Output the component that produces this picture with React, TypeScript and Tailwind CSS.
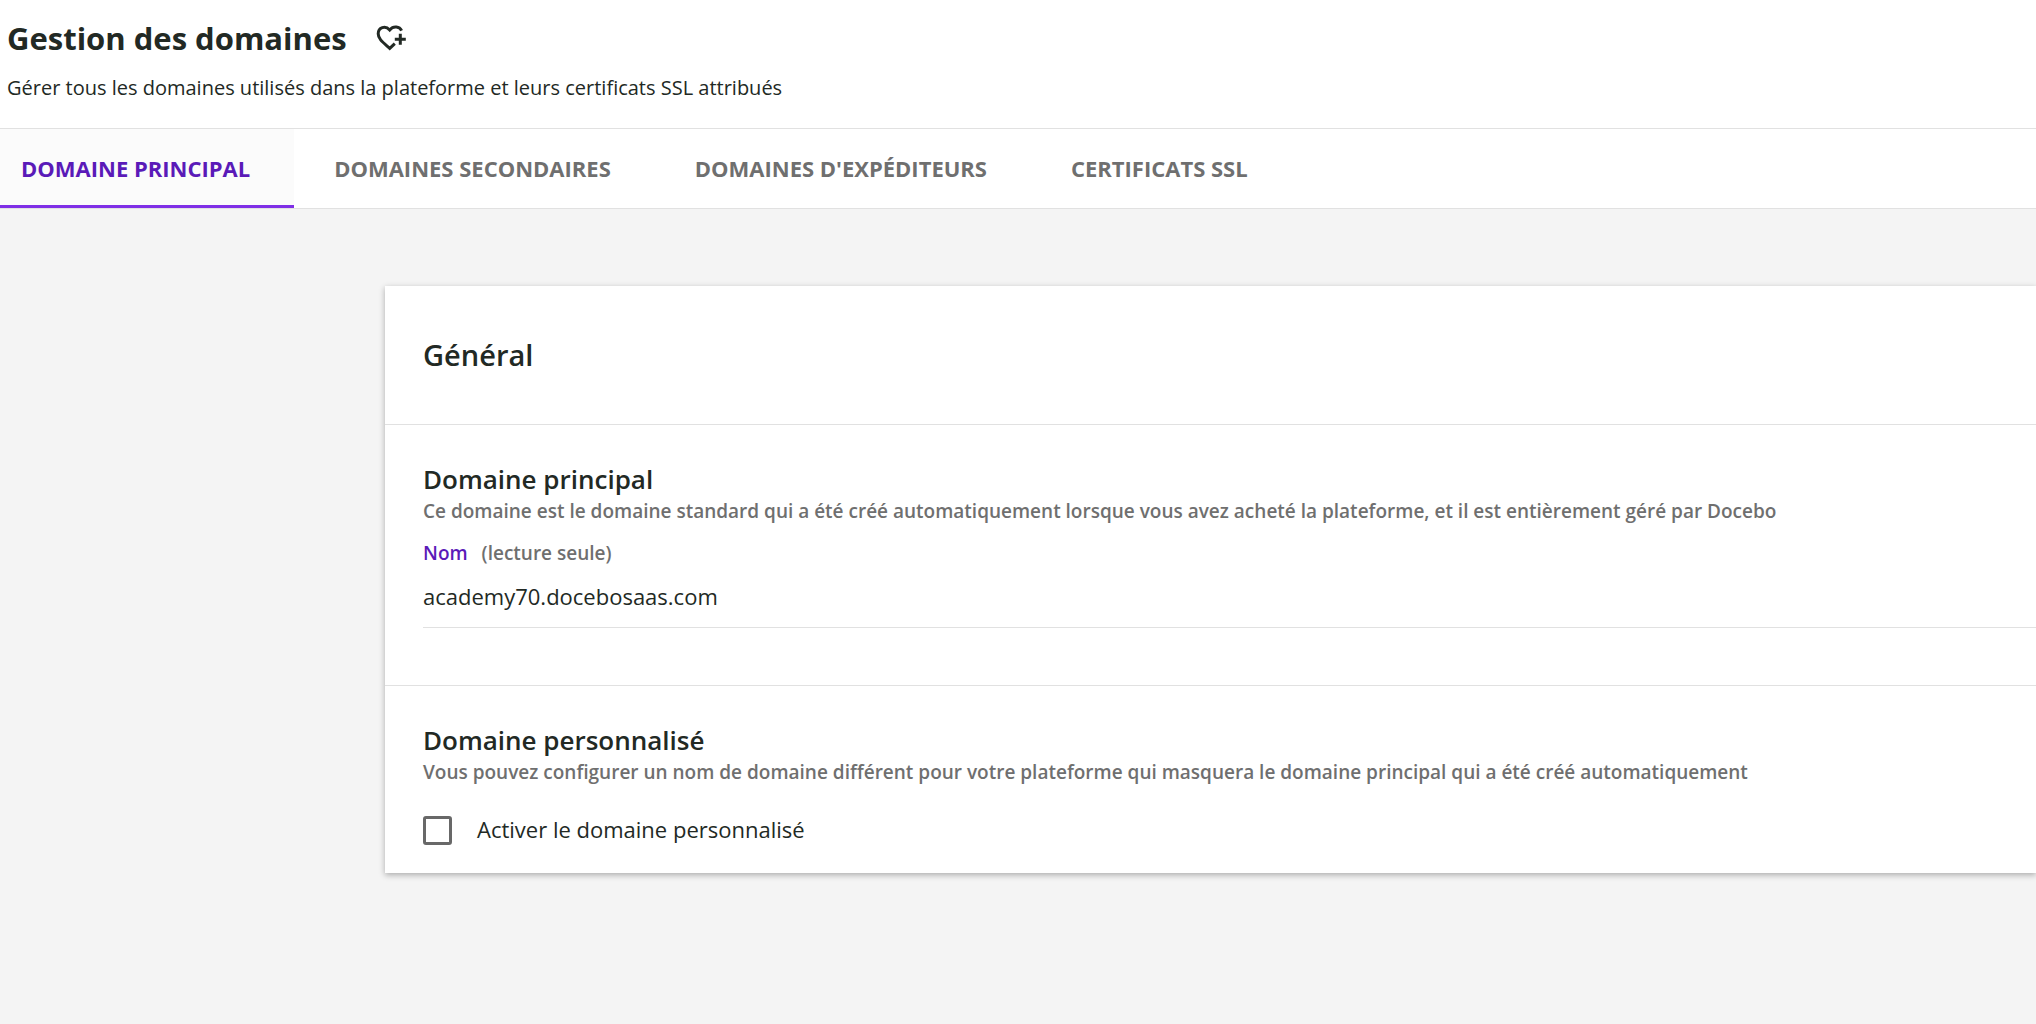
import { useState } from "react";

interface Tab {
  id: string;
  label: string;
}

const TABS: Tab[] = [
  { id: "main", label: "DOMAINE PRINCIPAL" },
  { id: "secondary", label: "DOMAINES SECONDAIRES" },
  { id: "senders", label: "DOMAINES D'EXPÉDITEURS" },
  { id: "ssl", label: "CERTIFICATS SSL" },
];

function HeartPlusIcon() {
  return (
    <svg className="w-8 h-8" viewBox="0 0 32 32" fill="none" stroke="currentColor" strokeWidth={3}>
      <path d="M26.6 8.6C24.6 4.6 18.6 3.4 14.7 7.9C10.2 3 3.2 5.4 3.2 11.8C3.2 17 8 20.4 14.7 26.4L19.8 21.6" />
      <path d="M25.3 11.8V22.8M19.8 17.3H30.8" />
    </svg>
  );
}

function SectionHeading({ title, description }: { title: string; description: string }) {
  return (
    <>
      <h3 className="text-[26px] leading-[34px] font-semibold">{title}</h3>
      <p className="text-[19px] leading-[30px] font-semibold text-[#6f6f6f]">{description}</p>
    </>
  );
}

export default function App() {
  const [activeTab, setActiveTab] = useState("main");
  const [customEnabled, setCustomEnabled] = useState(false);

  return (
    <div className="min-h-screen overflow-x-hidden bg-[#f4f4f4] text-[#222924] font-['Open_Sans',sans-serif]">
      <header className="bg-white px-[7px] pt-[18px] pb-[26px] border-b border-[#e1e1e1]">
        <div className="flex items-center gap-7">
          <h1 className="text-[31px] leading-10 font-bold">Gestion des domaines</h1>
          <button type="button" aria-label="Ajouter aux favoris">
            <HeartPlusIcon />
          </button>
        </div>
        <p className="mt-4 text-[20px] leading-7">
          Gérer tous les domaines utilisés dans la plateforme et leurs certificats SSL attribués
        </p>
      </header>

      <nav className="flex bg-white border-b border-[#e1e1e1]">
        {TABS.map((tab) => (
          <button
            key={tab.id}
            type="button"
            onClick={() => setActiveTab(tab.id)}
            className={`h-[79px] pr-11 text-[22px] font-bold border-y-[3px] border-t-transparent first:pl-[21px] pl-10 ${
              activeTab === tab.id
                ? "bg-[#fbfbfb] text-[#5a1ab8] border-b-[#7f2fe6]"
                : "text-[#6f6f6f] border-b-transparent"
            }`}
          >
            {tab.label}
          </button>
        ))}
      </nav>

      <main className="pt-[77px] pb-16 pl-[385px]">
        <div className="bg-white shadow-[0_2px_6px_rgba(0,0,0,0.3)]">
          <h2 className="px-[38px] pt-[49px] pb-[49px] text-[29px] leading-10 font-semibold border-b border-[#e1e1e1]">
            Général
          </h2>

          <section className="pl-[38px] pt-[37px] pb-[57px] border-b border-[#e1e1e1]">
            <SectionHeading
              title="Domaine principal"
              description="Ce domaine est le domaine standard qui a été créé automatiquement lorsque vous avez acheté la plateforme, et il est entièrement géré par Docebo"
            />
            <label
              htmlFor="domain-name"
              className="mt-[13px] flex gap-[14px] text-[19px] leading-7 font-semibold text-[#6f6f6f]"
            >
              <span className="text-[#5a1ab8]">Nom</span>
              <span>(lecture seule)</span>
            </label>
            <input
              id="domain-name"
              type="text"
              readOnly
              value="academy70.docebosaas.com"
              className="mt-[13px] block w-full pb-[15px] text-[22px] leading-8 border-b border-[#e1e1e1] outline-none"
            />
          </section>

          <section className="pl-[38px] pt-[37px] pb-7">
            <SectionHeading
              title="Domaine personnalisé"
              description="Vous pouvez configurer un nom de domaine différent pour votre plateforme qui masquera le domaine principal qui a été créé automatiquement"
            />
            <label className="mt-[29px] flex items-start gap-[25px] text-[22px] leading-[26px]">
              <input
                type="checkbox"
                checked={customEnabled}
                onChange={(e) => setCustomEnabled(e.target.checked)}
                className="appearance-none w-[29px] h-[29px] rounded-[3px] border-3 border-[#686868] checked:bg-[#5a1ab8]"
              />
              Activer le domaine personnalisé
            </label>
          </section>
        </div>
      </main>
    </div>
  );
}
